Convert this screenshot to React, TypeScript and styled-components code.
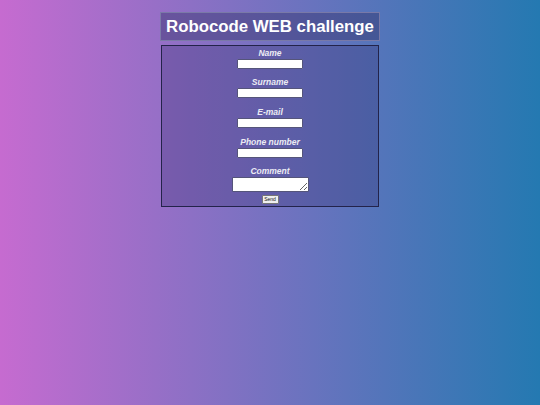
import React from "react";
import styled, { createGlobalStyle } from "styled-components";

const GlobalStyle = createGlobalStyle`
  html, body {
    margin: 0;
    padding: 0;
    height: 100%;
  }
  body {
    background: linear-gradient(to right, #c66bd0 0%, #2479b1 100%);
    font-family: "Liberation Sans", Arial, sans-serif;
    min-height: 405px;
  }
`;

const Page = styled.main`
  display: flex;
  flex-direction: column;
  align-items: center;
  padding-top: 12px;
  gap: 4px;
`;

const TitleBox = styled.h1`
  margin: 0;
  width: 220px;
  height: 29px;
  box-sizing: border-box;
  display: flex;
  align-items: center;
  justify-content: center;
  background: rgba(45, 45, 100, 0.42);
  border: 1px solid rgba(125, 125, 170, 0.9);
  color: #ffffff;
  font-size: 16.8px;
  font-weight: bold;
`;

const Form = styled.form`
  width: 218px;
  box-sizing: border-box;
  display: flex;
  flex-direction: column;
  align-items: center;
  padding: 2px 0 2px;
  background: rgba(45, 40, 105, 0.28);
  border: 1px solid #23234a;
`;

const Field = styled.div<{ $gap?: number }>`
  display: flex;
  flex-direction: column;
  align-items: center;
  gap: 1px;
  margin-top: ${(p) => p.$gap ?? 0}px;
`;

const Label = styled.label`
  font-size: 8.5px;
  line-height: 10px;
  font-weight: bold;
  font-style: italic;
  color: #ececf4;
`;

const Input = styled.input`
  width: 66px;
  height: 10px;
  box-sizing: border-box;
  padding: 0;
  margin: 0;
  background: #ffffff;
  border: 1px solid #55557a;
  border-radius: 1px;
`;

const TextArea = styled.textarea`
  width: 77px;
  height: 15px;
  box-sizing: border-box;
  padding: 0;
  margin: 0;
  background: #ffffff;
  border: 1px solid #55557a;
  border-radius: 1px;
  resize: both;
`;

const SendButton = styled.button`
  margin-top: 3px;
  width: 17px;
  height: 9px;
  box-sizing: border-box;
  padding: 0;
  font-family: "Liberation Sans", Arial, sans-serif;
  font-size: 5px;
  line-height: 7px;
  color: #111;
  background: #efefef;
  border: 1px solid #767676;
  border-radius: 1px;
`;

export default function App() {
  return (
    <>
      <GlobalStyle />
      <Page>
        <TitleBox>Robocode WEB challenge</TitleBox>
        <Form onSubmit={(e) => e.preventDefault()}>
          <Field>
            <Label>Name</Label>
            <Input type="text" />
          </Field>
          <Field $gap={8}>
            <Label>Surname</Label>
            <Input type="text" />
          </Field>
          <Field $gap={9}>
            <Label>E-mail</Label>
            <Input type="email" />
          </Field>
          <Field $gap={9}>
            <Label>Phone number</Label>
            <Input type="tel" />
          </Field>
          <Field $gap={8}>
            <Label>Comment</Label>
            <TextArea />
          </Field>
          <SendButton type="submit">Send</SendButton>
        </Form>
      </Page>
    </>
  );
}
